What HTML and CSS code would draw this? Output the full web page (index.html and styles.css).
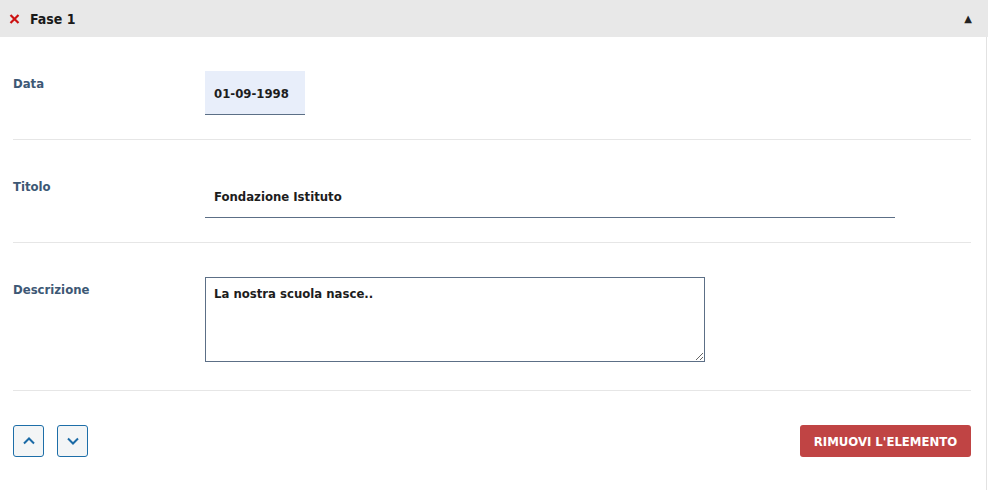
FILE: index.html
```html
<!DOCTYPE html>
<html lang="it">
<head>
<meta charset="utf-8">
<link rel="stylesheet" href="styles.css">
</head>
<body>
<div class="panel">
  <div class="panel-head">
    <span class="close"><svg width="11" height="10" viewBox="0 0 11 10"><path d="M1.5 1 L9.5 9 M9.5 1 L1.5 9" stroke="#cc1111" stroke-width="2.2" fill="none"/></svg></span>
    <span class="head-title">Fase 1</span>
    <span class="toggle">&#x25B2;</span>
  </div>
  <div class="panel-body">
    <div class="row">
      <div class="label">Data</div>
      <div class="field"><div class="input date">01-09-1998</div></div>
    </div>
    <div class="row">
      <div class="label">Titolo</div>
      <div class="field"><div class="input title">Fondazione Istituto</div></div>
    </div>
    <div class="row row-last">
      <div class="label">Descrizione</div>
      <div class="field"><textarea class="area">La nostra scuola nasce..</textarea></div>
    </div>
    <div class="actions">
      <div class="arrows">
        <button class="arrow"><svg width="14" height="10" viewBox="0 0 14 10"><path d="M2 7.5 L7 2.5 L12 7.5" fill="none" stroke="#1a6aa6" stroke-width="2"/></svg></button>
        <button class="arrow"><svg width="14" height="10" viewBox="0 0 14 10"><path d="M2 2.5 L7 7.5 L12 2.5" fill="none" stroke="#1a6aa6" stroke-width="2"/></svg></button>
      </div>
      <button class="remove">RIMUOVI L'ELEMENTO</button>
    </div>
  </div>
</div>
</body>
</html>
```
FILE: styles.css
```css
html, body {
  margin: 0;
  padding: 0;
  background: #fff;
}
body {
  font-family: "DejaVu Sans Condensed", "DejaVu Sans", sans-serif;
  font-weight: bold;
  font-size: 13px;
  color: #1d1d1d;
}
.panel {
  width: 988px;
}
.panel-head {
  height: 37px;
  background: #e8e8e8;
  display: flex;
  align-items: center;
  padding: 0 16px 0 9px;
  box-sizing: border-box;
}
.close {
  width: 21px;
  display: flex;
  align-items: center;
  padding-top: 1px;
}
.head-title {
  font-size: 14px;
  color: #1a1a1a;
  flex: 1;
}
.toggle {
  font-size: 10px;
  color: #222;
  font-family: "DejaVu Sans", sans-serif;
}
.panel-body {
  width: 987px;
  box-sizing: border-box;
  border-right: 1px solid #e2e2e2;
  padding: 0 15px 0 13px;
  height: 453px;
}
.row {
  display: flex;
  padding: 34px 0 24px;
  border-bottom: 1px solid #e6e6e6;
}
.row-last {
  padding-bottom: 28px;
}
.label {
  width: 192px;
  flex: none;
  color: #3d5875;
  padding-top: 6px;
  line-height: 14px;
}
.field {
  flex: 1;
}
.input {
  height: 44px;
  box-sizing: border-box;
  border-bottom: 1px solid #5c6f86;
  padding: 0 9px;
  display: flex;
  align-items: center;
  padding-top: 1px;
}
.date {
  width: 100px;
  background: #e8eefa;
}
.title {
  width: 690px;
}
.area {
  display: block;
  width: 500px;
  height: 85px;
  box-sizing: border-box;
  border: 1px solid #5c6f86;
  border-radius: 0;
  margin: 0;
  padding: 8px 8px;
  font: inherit;
  color: #1d1d1d;
  outline: none;
}
.actions {
  display: flex;
  justify-content: space-between;
  align-items: center;
  padding-top: 34px;
}
.arrows {
  display: flex;
  gap: 13px;
}
.arrow {
  width: 31px;
  height: 32px;
  box-sizing: border-box;
  border: 1px solid #1d6ea8;
  border-radius: 3px;
  background: #f3f5f6;
  padding: 0;
  display: flex;
  align-items: center;
  justify-content: center;
}
.remove {
  width: 171px;
  height: 32px;
  border: none;
  border-radius: 3px;
  background: #c04444;
  color: #fff;
  font: inherit;
  font-size: 13px;
  padding: 0;
}
```
